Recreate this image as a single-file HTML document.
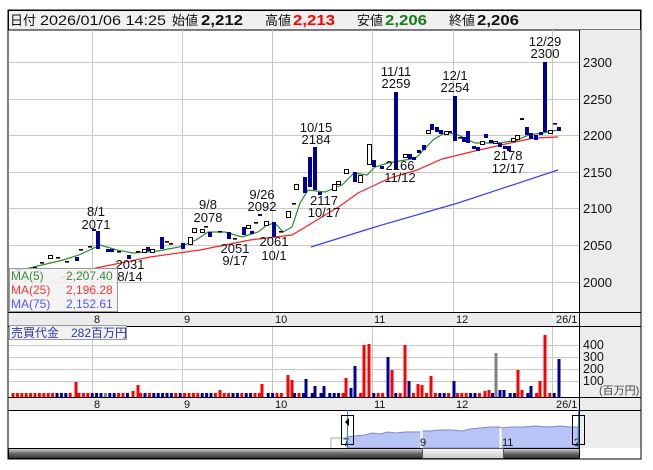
<!DOCTYPE html>
<html><head><meta charset="utf-8">
<style>
html,body{margin:0;padding:0;background:#fff;width:653px;height:470px;overflow:hidden}
svg{display:block}
text{font-family:"Liberation Sans","Noto Sans CJK JP",sans-serif;font-size:13px;fill:#111}
</style></head>
<body>
<svg id="s" width="653" height="470" xmlns="http://www.w3.org/2000/svg">
<defs>
<linearGradient id="sb" x1="0" y1="0" x2="0" y2="1"><stop offset="0" stop-color="#d8d8d8"/><stop offset="0.5" stop-color="#6a6a6a"/><stop offset="1" stop-color="#303030"/></linearGradient>
<linearGradient id="th" x1="0" y1="0" x2="0" y2="1"><stop offset="0" stop-color="#fafafa"/><stop offset="1" stop-color="#c8c8c8"/></linearGradient>
</defs>
<rect x="8" y="10" width="633" height="449" fill="#fff" stroke="#000"/>
<!-- header -->
<rect x="8.5" y="10.5" width="632" height="19.5" fill="#f0f0f0" stroke="#000"/>
<text x="10" y="25" style="font-size:13px">日付</text>
<text x="40" y="25" style="font-size:14px" textLength="126" lengthAdjust="spacingAndGlyphs">2026/01/06 14:25</text>
<text x="172" y="25" style="font-size:13px">始値</text>
<text x="201" y="25" style="font-size:15px;font-weight:bold" textLength="42" lengthAdjust="spacingAndGlyphs">2,212</text>
<text x="265" y="25" style="font-size:13px">高値</text>
<text x="293" y="25" style="font-size:15px;font-weight:bold;fill:#f00" textLength="42" lengthAdjust="spacingAndGlyphs">2,213</text>
<text x="357" y="25" style="font-size:13px">安値</text>
<text x="385" y="25" style="font-size:15px;font-weight:bold;fill:#1a7a1a" textLength="42" lengthAdjust="spacingAndGlyphs">2,206</text>
<text x="449" y="25" style="font-size:13px">終値</text>
<text x="477" y="25" style="font-size:15px;font-weight:bold" textLength="42" lengthAdjust="spacingAndGlyphs">2,206</text>
<!-- right panels -->
<rect x="579" y="30" width="61.5" height="282" fill="#ececec"/>
<rect x="579" y="326" width="61.5" height="71" fill="#ececec"/>
<rect x="579" y="410" width="61.5" height="38" fill="#ececec"/>
<rect x="9" y="312" width="631.5" height="14" fill="#ececec"/>
<rect x="9" y="397" width="631.5" height="13" fill="#ececec"/>
<g id="grid" stroke="#c8c8c8" stroke-width="1"></g>
<g id="plot"></g>
<line x1="579.5" y1="30" x2="579.5" y2="459" stroke="#000"/>
<g stroke="#000"><line x1="8" y1="312.5" x2="641" y2="312.5"/><line x1="8" y1="326.5" x2="641" y2="326.5"/><line x1="8" y1="397.5" x2="641" y2="397.5"/><line x1="8" y1="410.5" x2="641" y2="410.5"/></g>
<!-- price labels -->
<g>
<text x="583" y="67">2300</text><text x="583" y="104">2250</text><text x="583" y="140">2200</text><text x="583" y="177">2150</text><text x="583" y="213">2100</text><text x="583" y="250">2050</text><text x="583" y="287">2000</text>
</g>
<g>
<text x="583" y="349" style="font-size:12.5px">400</text><text x="583" y="361" style="font-size:12.5px">300</text><text x="583" y="373" style="font-size:12.5px">200</text><text x="583" y="385" style="font-size:12.5px">100</text>
<text x="599" y="394" style="font-size:11px;fill:#444">(百万円)</text>
</g>
<g>
<text x="94" y="323" style="font-size:11px">8</text><text x="184" y="323" style="font-size:11px">9</text><text x="275" y="323" style="font-size:11px">10</text><text x="374" y="323" style="font-size:11px">11</text><text x="456" y="323" style="font-size:11px">12</text><text x="556" y="323" style="font-size:11px">26/1</text>
<text x="94" y="408" style="font-size:11px">8</text><text x="184" y="408" style="font-size:11px">9</text><text x="275" y="408" style="font-size:11px">10</text><text x="374" y="408" style="font-size:11px">11</text><text x="456" y="408" style="font-size:11px">12</text><text x="556" y="408" style="font-size:11px">26/1</text>
</g>
<!-- annotations -->
<g text-anchor="middle" id="ann"></g>
<!-- MA legend -->
<rect x="9.5" y="268.5" width="108" height="43" fill="#f2f2f2" fill-opacity="0.85" stroke="#999"/>
<text x="11" y="280" style="font-size:12px;fill:#3a8a3a">MA(5)</text><text x="66" y="280" style="font-size:12px;fill:#3a8a3a">2,207.40</text>
<text x="11" y="294" style="font-size:12px;fill:#f33">MA(25)</text><text x="66" y="294" style="font-size:12px;fill:#f33">2,196.28</text>
<text x="11" y="308" style="font-size:12px;fill:#55f">MA(75)</text><text x="66" y="308" style="font-size:12px;fill:#55f">2,152.61</text>
<!-- volume legend -->
<rect x="9.5" y="325.5" width="117" height="14" fill="#f2f2f2" stroke="#999"/>
<text x="11" y="337" style="font-size:12px;fill:#3333aa">売買代金　282百万円</text>
<!-- navigator -->
<path d="M331,448 V438 H347" fill="none" stroke="#aaa"/>
<path id="nav" fill="#b8c4f6" stroke="#7d86cf"/>
<line x1="421.5" y1="430" x2="421.5" y2="448" stroke="#fff" stroke-width="2"/>
<line x1="500.5" y1="428" x2="500.5" y2="448" stroke="#fff" stroke-width="2"/>
<text x="343" y="446" style="font-size:11px">7</text><text x="420" y="446" style="font-size:11px">9</text><text x="502" y="446" style="font-size:11px">11</text><text x="574" y="446" style="font-size:11px">2</text>
<line x1="347.5" y1="410" x2="347.5" y2="459" stroke="#1a8ac0"/>
<line x1="578.5" y1="410" x2="578.5" y2="459" stroke="#1a8ac0"/>
<rect x="341.5" y="415.5" width="12" height="29" fill="none" stroke="#000"/>
<rect x="572.5" y="415.5" width="12" height="29" fill="none" stroke="#000"/>
<path d="M345,422 L349,418 L349,426 Z" fill="#000"/>
<rect x="8.5" y="448.5" width="571" height="10" fill="url(#sb)" stroke="#000"/>
<rect x="422.5" y="448.5" width="81" height="10" fill="url(#th)" stroke="#555"/>
<rect x="8" y="10" width="633" height="449" fill="none" stroke="#000"/>
</svg>
<script>
var NS="http://www.w3.org/2000/svg";
function el(p,t,a){var e=document.createElementNS(NS,t);for(var k in a)e.setAttribute(k,a[k]);p.appendChild(e);return e;}
var g=document.getElementById('grid');
[92,182,272,372,453,552].forEach(function(x){el(g,'line',{x1:x+.5,y1:30,x2:x+.5,y2:312});el(g,'line',{x1:x+.5,y1:326,x2:x+.5,y2:397});});
[62,99,135,172,208,245,282].forEach(function(y){el(g,'line',{x1:9,y1:y+.5,x2:579,y2:y+.5});});
[345,357,369,381].forEach(function(y){el(g,'line',{x1:9,y1:y+.5,x2:579,y2:y+.5});});
var P=document.getElementById('plot');
function pl(pts,c){el(P,'polyline',{points:pts.map(function(p){return p.join(',')}).join(' '),fill:'none',stroke:c,'stroke-width':1.2});}
pl([[311,247],[375,227],[458,203],[558,170]],'#3344ee');
pl([[60,278],[96,268],[150,257],[200,250],[250,240],[292,235],[317,220],[340,206],[358,193],[390,178],[417,170],[442,159],[479,150],[510,143],[534,138],[558,137]],'#ff2020');
pl([[12,272],[42,265],[63,260],[79,255],[96,247],[100,245],[117,250],[133,253],[158,251],[179,247],[196,240],[208,232],[225,232],[242,237],[258,232],[267,225],[275,223],[283,232],[292,227],[300,203],[308,190],[325,192],[342,185],[354,173],[367,175],[375,167],[388,163],[411,159],[417,157],[433,140],[446,132],[458,135],[475,143],[500,143],[517,140],[529,135],[542,133],[558,130]],'#2a8a2a');
var C=[[17,268,270,'b'],[21,268,270,'b'],[35,267,269,'d'],[42,262,264,'d'],[50,255,258,'h'],[58,257,259,'d'],[67,261,263,'d'],[77,257,261,'b'],[81,249,251,'d'],[90,246,248,'d'],[94,229,231,'b'],[98,231,249,'b'],[108,249,252,'b'],[112,249,252,'b'],[119,251,253,'d'],[129,255,259,'b'],[138,251,253,'d'],[144,249,252,'h'],[148,247,251,'b'],[152,249,252,'h'],[162,237,249,'b'],[167,241,243,'d'],[171,243,245,'d'],[183,243,249,'b'],[190,237,244,'h'],[194,228,232,'h'],[202,229,232,'h'],[206,226,228,'d'],[210,232,237,'b'],[220,231,233,'d'],[229,232,239,'b'],[235,238,240,'d'],[244,227,235,'b'],[248,225,228,'h'],[252,231,234,'b'],[256,222,224,'d'],[260,214,216,'b'],[266,221,225,'h'],[274,222,237,'b'],[281,231,233,'d'],[288,211,217,'h'],[294,203,205,'d'],
[296,184,189,'h'],[305,177,193,'b'],[310,157,187,'b'],[315,147,190,'b'],[320,192,195,'b'],[334,184,190,'h'],[338,181,184,'h'],[346,169,173,'h'],[355,172,182,'b'],[360,175,182,'h'],[369,144,164,'h'],[374,160,167,'b'],[382,166,169,'b'],[396,92,170,'b'],[405,154,157,'h'],[410,154,159,'b'],[414,157,160,'b'],[419,150,153,'b'],[424,145,150,'b'],[428,130,133,'h'],[432,124,130,'b'],[437,127,132,'b'],[441,130,134,'b'],[446,131,134,'h'],[450,131,133,'d'],[455,96,141,'b'],[460,137,139,'d'],[464,137,142,'b'],[468,131,143,'b'],[474,146,149,'b'],[478,147,151,'b'],[482,141,144,'h'],[486,134,138,'b'],[491,140,143,'b'],[495,141,143,'h'],[500,143,147,'b'],[505,146,149,'b'],[509,146,151,'b'],[513,138,141,'h'],[517,135,139,'h'],[522,118,120,'b'],[527,127,135,'b'],[531,133,139,'b'],[536,135,140,'b'],[541,132,135,'b'],[545,62,132,'b'],[550,130,133,'h'],[555,123,125,'d'],[559,127,131,'b']];
C.forEach(function(c){var x=c[0]-2,h=Math.max(c[2]-c[1],1.5);
 if(c[3]=='b')el(P,'rect',{x:x,y:c[1],width:4,height:h,fill:'#000099'});
 else if(c[3]=='h')el(P,'rect',{x:x+.5,y:c[1]+.5,width:4,height:h,fill:'#fff',stroke:'#000','stroke-width':1});
 else el(P,'rect',{x:x,y:c[1],width:4,height:1.6,fill:'#000'});
});
var tall=[[76,382,'r'],[138,385,'r'],[133,391,'r'],[220,390,'r'],[262,384,'r'],[288,375,'r'],[292,380,'r'],[306,379,'b'],[315,386,'b'],[324,386,'b'],[346,378,'r'],[351,388,'b'],[355,366,'b'],[364,345,'r'],[369,344,'r'],[388,357,'b'],[392,370,'r'],[405,345,'r'],[409,381,'b'],[418,384,'r'],[422,385,'r'],[431,376,'r'],[454,381,'b'],[485,391,'r'],[489,390,'r'],[496,353,'g'],[500,390,'b'],[504,390,'b'],[518,370,'r'],[522,390,'r'],[531,386,'b'],[540,381,'r'],[545,335,'r'],[559,359,'b']];
var cols={r:'#ff0000',b:'#000099',g:'#808080'};
var pat='rrrrrrrrrrbbbrrrrrbbbgbbrrbrrrbrbbbbbrbrrrrbbbrrrrbbrbbrrrbbrrrbbrbrbrbrbbbrrbbrrbbrrrrbrrbrrbrrrbbrbrrrbbrrbbbrrbbrbbbrbrrb';
var used=[];
tall.forEach(function(t){el(P,'rect',{x:t[0]-1.5,y:t[1],width:3,height:397-t[1],fill:cols[t[2]]});used.push(t[0]);});
for(var i=0;i<125;i++){var x=13+i*4.4;var skip=false;used.forEach(function(u){if(Math.abs(u-x)<2.2)skip=true;});
 if(skip)continue;var ch=pat.charAt(i%pat.length);if(ch==' ')continue;
 el(P,'rect',{x:x-1.5,y:393,width:3,height:4,fill:cols[ch]});}
var d='M347,448 L347,437';var pts=[[355,436],[365,435],[372,433],[380,434],[388,432],[396,433],[405,432],[414,432],[421,432],[421,431],[430,431],[440,430],[452,430],[462,431],[470,429],[480,428],[490,427],[500,427],[500,428],[512,427],[524,427],[535,426],[548,427],[560,426],[570,427],[578,427]];
pts.forEach(function(p){d+=' L'+p[0]+','+p[1];});d+=' L578,448 Z';
document.getElementById('nav').setAttribute('d',d);
var A=document.getElementById('ann');
[[96,'8/1','2071',216,229],[130,'2031','8/14',269,281],[208,'9/8','2078',209,222],[262,'9/26','2092',199,211],[235,'2051','9/17',253,265],[274,'2061','10/1',246,260],[316,'10/15','2184',132,144],[324,'2117','10/17',205,217],[396,'11/11','2259',76,88],[400,'2166','11/12',170,182],[455,'12/1','2254',80,92],[508,'2178','12/17',160,173],[545,'12/29','2300',46,58]].forEach(function(a){
 var t=el(A,'text',{x:a[0],y:a[3]});t.textContent=a[1];var t2=el(A,'text',{x:a[0],y:a[4]});t2.textContent=a[2];});
</script>
</body></html>
